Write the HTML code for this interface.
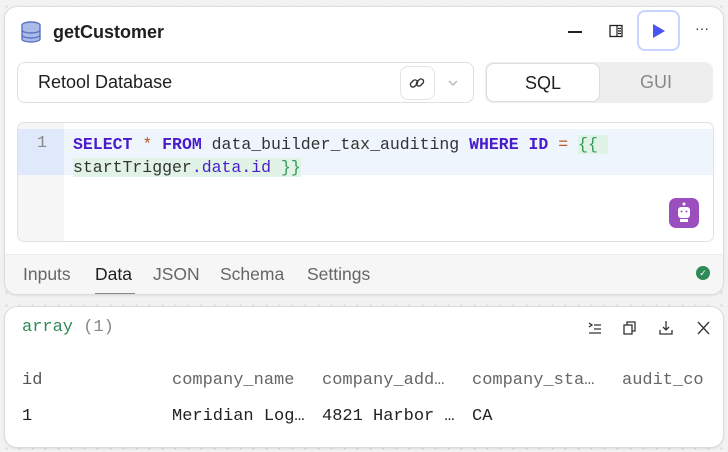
<!DOCTYPE html>
<html><head><meta charset="utf-8"><style>
*{box-sizing:border-box;margin:0;padding:0}
body{width:728px;height:452px;overflow:hidden;background:#f2f2f2;background-image:radial-gradient(#d8d8d8 1px,transparent 1.2px);background-size:13px 13px;font-family:"Liberation Sans",sans-serif;position:relative;color:#222}
.card{position:absolute;background:#fff;border:1px solid #dcdcdc;border-radius:13px;box-shadow:0 1px 2px rgba(0,0,0,.08)}
.mono{font-family:"Liberation Mono",monospace}
.abs{position:absolute}
.c{position:absolute;font-family:"Liberation Mono",monospace;font-size:17px;white-space:pre}
</style></head><body>
<div class="card" style="left:4px;top:6px;width:720px;height:289px;overflow:hidden">
 <svg class="abs" style="left:14px;top:13px" width="24" height="24" viewBox="0 0 24 24"><g fill="#a9bbe6" stroke="#5a72c4" stroke-width="1.4"><ellipse cx="12" cy="5" rx="9" ry="3"/><path d="M3 5v14c0 1.7 4 3 9 3s9-1.3 9-3V5"/><path d="M3 10c0 1.7 4 3 9 3s9-1.3 9-3M3 15c0 1.7 4 3 9 3s9-1.3 9-3" fill="none"/></g></svg>
 <div class="abs" style="left:48px;top:15px;font-size:18px;font-weight:bold;color:#1f1f1f">getCustomer</div>
 <div class="abs" style="left:563px;top:24px;width:14px;height:1.5px;background:#222"></div>
 <svg class="abs" style="left:604px;top:17px" width="14" height="14" viewBox="0 0 14 14"><rect x="1" y="1.5" width="12" height="11" fill="none" stroke="#222" stroke-width="1.3"/><path d="M8 2v10M9 4.5h3M9 7h3M9 9.5h3" stroke="#222" stroke-width="1.2"/></svg>
 <div class="abs" style="left:632px;top:3px;width:43px;height:41px;border:2px solid #c9d3ff;border-radius:8px;background:#fff"></div>
 <svg class="abs" style="left:647px;top:16px" width="14" height="16" viewBox="0 0 14 16"><path d="M1 1l12 7-12 7z" fill="#4a55f5"/></svg>
 <div class="abs" style="left:690px;top:13px;font-size:14px;color:#333">···</div>
 <div class="abs" style="left:12px;top:55px;width:457px;height:41px;border:1px solid #e0e0e0;border-radius:8px"></div>
 <div class="abs" style="left:33px;top:65px;font-size:18px;color:#1f1f1f">Retool Database</div>
 <div class="abs" style="left:395px;top:59px;width:35px;height:34px;border:1px solid #e4e4e4;border-radius:8px"></div>
 <svg class="abs" style="left:404px;top:68px" width="16" height="16" viewBox="0 0 16 16" fill="none" stroke="#333" stroke-width="1.4"><rect x="1" y="6" width="8" height="5" rx="2.5" transform="rotate(-45 5 8.5)"/><rect x="7" y="5" width="8" height="5" rx="2.5" transform="rotate(-45 11 7.5)"/></svg>
 <svg class="abs" style="left:442px;top:72px" width="12" height="8"><path d="M2 2l4 4 4-4" fill="none" stroke="#bbb" stroke-width="1.5"/></svg>
 <div class="abs" style="left:480px;top:55px;width:228px;height:41px;background:#eee;border-radius:8px"></div>
 <div class="abs" style="left:481px;top:56px;width:114px;height:39px;background:#fff;border:1px solid #ddd;border-radius:8px;text-align:center;line-height:38px;font-size:18px;color:#1f1f1f">SQL</div>
 <div class="abs" style="left:595px;top:56px;width:112px;height:39px;text-align:center;line-height:38px;font-size:18px;color:#888">GUI</div>
 <div class="abs" style="left:12px;top:115px;width:697px;height:120px;border:1px solid #e0e0e0;border-radius:7px;overflow:hidden">
  <div class="abs" style="left:0;top:0;width:46px;height:120px;background:#f6f6f6"></div>
  <div class="abs" style="left:0;top:6px;width:46px;height:46px;background:#dfe9fb"></div>
  <div class="abs" style="left:46px;top:6px;width:651px;height:46px;background:#eef5fd"></div>
  <div class="abs mono" style="left:19px;top:10px;font-size:16.5px;color:#888">1</div>
  <div class="abs mono" style="left:55px;top:10px;font-size:16.5px;line-height:23px;color:#333;white-space:pre"><b style="color:#4a1ccc">SELECT</b> <span style="color:#b85a1c">*</span> <b style="color:#4a1ccc">FROM</b> data_builder_tax_auditing <b style="color:#4a1ccc">WHERE</b> <b style="color:#4a1ccc">ID</b> <span style="color:#b85a1c">=</span> <span style="background:#e1f3e6;color:#2f9a55">{{ </span>
<span style="background:#e1f3e6">startTrigger<span style="color:#4a1ccc">.data.id</span> <span style="color:#2f9a55">}}</span></span></div>
  <div class="abs" style="left:651px;top:75px;width:30px;height:30px;background:#9b4fbf;border-radius:7px"></div>
  <svg class="abs" style="left:655px;top:78px" width="22" height="24" viewBox="0 0 22 24"><circle cx="11" cy="3" r="1.5" fill="#fff"/><rect x="5" y="6" width="12" height="11" rx="3" fill="#fff"/><circle cx="8.5" cy="10.5" r="1" fill="#9b4fbf"/><circle cx="13.5" cy="10.5" r="1" fill="#9b4fbf"/><rect x="7" y="18" width="8" height="3" fill="#fff"/></svg>
 </div>
 <div class="abs" style="left:0;top:247px;width:720px;height:42px;background:#f6f6f6;border-top:1px solid #eee"></div>
 <div class="abs" style="left:18px;top:257px;font-size:17.5px;color:#666">Inputs</div>
 <div class="abs" style="left:90px;top:257px;font-size:17.5px;color:#1f1f1f">Data</div>
 <div class="abs" style="left:90px;top:286px;width:40px;height:3px;background:#888"></div>
 <div class="abs" style="left:148px;top:257px;font-size:17.5px;color:#666">JSON</div>
 <div class="abs" style="left:215px;top:257px;font-size:17.5px;color:#666">Schema</div>
 <div class="abs" style="left:302px;top:257px;font-size:17.5px;color:#666">Settings</div>
 <div class="abs" style="left:691px;top:259px;width:14px;height:14px;border-radius:50%;background:#2e8b57;color:#fff;font-size:9px;text-align:center;line-height:14px">✓</div>
</div>
<div class="card" style="left:4px;top:306px;width:720px;height:142px;overflow:hidden">
 <div class="abs mono" style="left:17px;top:11px;font-size:17px;color:#2e8b57">array <span style="color:#888">(1)</span></div>
 <svg class="abs" style="left:582px;top:13px" width="126" height="16" viewBox="0 0 126 16" fill="none" stroke="#333" stroke-width="1.3"><path d="M2 3l3 2-3 2M7 5h7M7 9h7M2 13h12"/><rect x="37" y="5" width="8" height="9"/><path d="M40 5V2h8v9h-3"/><path d="M79 1v9M76 7l3 3 3-3M73 10v4h12v-4"/><path d="M122 2l-11 12M111 2l11 12"/></svg>
 <div class="c" style="left:17px;top:64px;color:#555">id</div>
 <div class="c" style="left:167px;top:64px;color:#666">company_name</div>
 <div class="c" style="left:317px;top:64px;color:#666">company_add…</div>
 <div class="c" style="left:467px;top:64px;color:#666">company_sta…</div>
 <div class="c" style="left:617px;top:64px;color:#666">audit_co</div>
 <div class="c" style="left:17px;top:100px;color:#222">1</div>
 <div class="c" style="left:167px;top:100px;color:#222">Meridian Log…</div>
 <div class="c" style="left:317px;top:100px;color:#222">4821 Harbor …</div>
 <div class="c" style="left:467px;top:100px;color:#222">CA</div>
</div>
</body></html>
